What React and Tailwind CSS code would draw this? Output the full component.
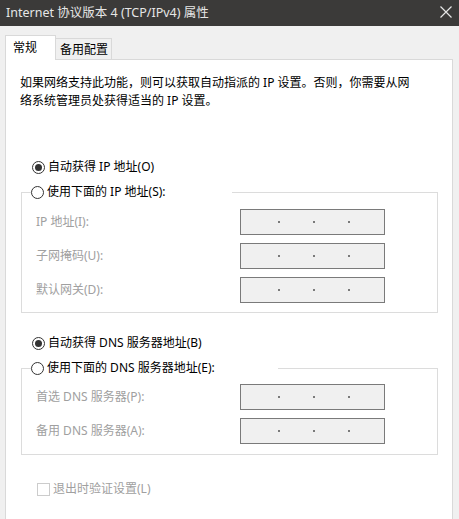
import React from "react";

const FONT = { fontFamily: '"Noto Sans", "Noto Sans CJK SC", sans-serif' };

function Radio({ checked }) {
  return (
    <span className="w-[13px] h-[13px] rounded-full border border-[#333333] bg-white flex items-center justify-center shrink-0">
      {checked && <span className="w-[7px] h-[7px] rounded-full bg-[#333333]"></span>}
    </span>
  );
}

function IpBox() {
  return (
    <div className="w-[145px] h-[26px] border border-[#7a7a7a] bg-[#f0f0f0] flex items-center">
      <span className="ml-[37px] w-[2px] h-[2px] bg-[#7a7a7a]"></span>
      <span className="ml-[33px] w-[2px] h-[2px] bg-[#7a7a7a]"></span>
      <span className="ml-[33px] w-[2px] h-[2px] bg-[#7a7a7a]"></span>
    </div>
  );
}

function Row({ label }) {
  return (
    <div className="flex items-center h-[26px]">
      <div className="w-[204px] text-[12px] text-[#a0a0a0]">{label}</div>
      <IpBox />
    </div>
  );
}

export default function App() {
  return (
    <div className="w-[459px] h-[519px] overflow-hidden bg-[#f0f0f0] flex flex-col text-black" style={FONT}>
      {/* 标题栏 */}
      <div className="h-[26px] bg-[#3b3a39] flex items-center justify-between pl-[6px] shrink-0">
        <span className="text-[12.5px] text-[#e6e6e6] leading-none">Internet 协议版本 4 (TCP/IPv4) 属性</span>
        <svg width="12" height="12" viewBox="0 0 12 12" className="mr-[7px] mb-[3px]">
          <path d="M0.5 0.5 L11.5 11.5 M11.5 0.5 L0.5 11.5" stroke="#e6e6e6" strokeWidth="1.2" />
        </svg>
      </div>

      {/* 标签页 */}
      <div className="flex items-end pl-[5px] mt-[9px] h-[24px] shrink-0 relative z-10">
        <div className="w-[51px] h-[25px] bg-white border-t border-l border-r border-[#d9d9d9] text-[12px] pl-[7px] pt-[3px] -mb-px">常规</div>
        <div className="w-[56px] h-[21px] bg-[#f0f0f0] border-t border-r border-[#d9d9d9] text-[12px] pl-[4px] pt-[2px]">备用配置</div>
      </div>

      {/* 内容 */}
      <div className="flex-1 ml-[5px] w-[448px] bg-white border-t border-l border-r border-[#d9d9d9] px-[15px]">
        <p className="-ml-px mt-[14px] text-[12px] leading-[18px] whitespace-nowrap">
          如果网络支持此功能，则可以获取自动指派的 IP 设置。否则，你需要从网
          <br />
          络系统管理员处获得适当的 IP 设置。
        </p>

        <div className="flex items-center h-[18px] mt-[48px] pl-[11px] gap-[3px] text-[12px]">
          <Radio checked />
          <span>自动获得 IP 地址(O)</span>
        </div>

        <fieldset className="w-[417px] border border-[#dcdcdc] mt-[7px] pl-[14px] pb-[9px]">
          <legend className="-ml-[5px] w-[201px] h-[18px] flex items-center gap-[3px] text-[12px] bg-white">
            <Radio />
            <span>使用下面的 IP 地址(S):</span>
          </legend>
          <div className="flex flex-col gap-[8px] mt-[8px]">
            <Row label="IP 地址(I):" />
            <Row label="子网掩码(U):" />
            <Row label="默认网关(D):" />
          </div>
        </fieldset>

        <div className="flex items-center h-[18px] mt-[21px] pl-[11px] gap-[3px] text-[12px]">
          <Radio checked />
          <span>自动获得 DNS 服务器地址(B)</span>
        </div>

        <fieldset className="w-[417px] border border-[#dcdcdc] mt-[7px] pl-[14px] pb-[10px]">
          <legend className="-ml-[5px] w-[247px] h-[18px] flex items-center gap-[3px] text-[12px] bg-white">
            <Radio />
            <span>使用下面的 DNS 服务器地址(E):</span>
          </legend>
          <div className="flex flex-col gap-[8px] mt-[7px]">
            <Row label="首选 DNS 服务器(P):" />
            <Row label="备用 DNS 服务器(A):" />
          </div>
        </fieldset>

        <div className="flex items-center mt-[25px] pl-[16px] text-[12px] text-[#a0a0a0]">
          <span className="w-[13px] h-[13px] border border-[#cccccc] bg-white shrink-0"></span>
          <span className="ml-[3px]">退出时验证设置(L)</span>
        </div>
      </div>
    </div>
  );
}
